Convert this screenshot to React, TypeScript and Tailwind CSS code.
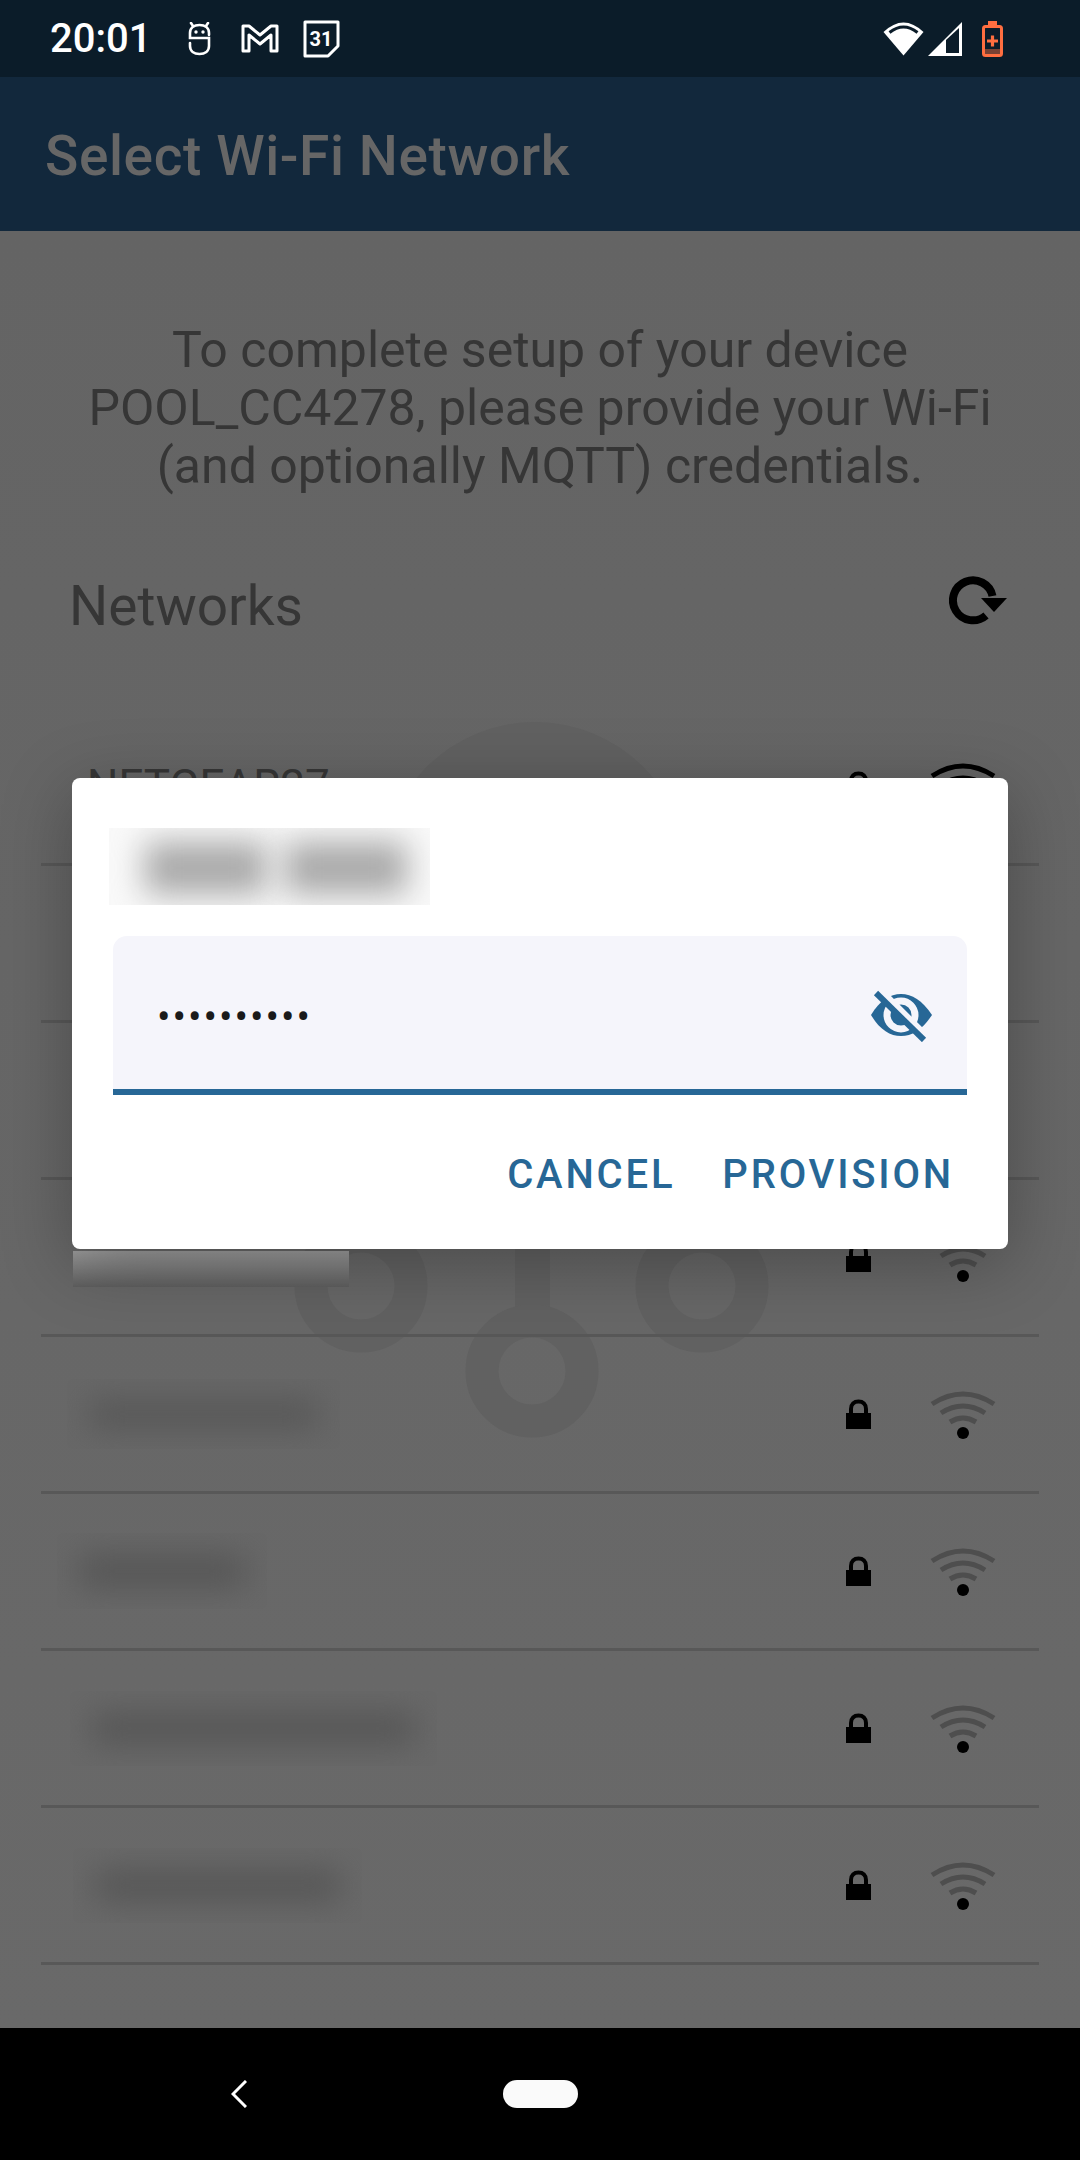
const blue = '#276796'

function StatusIcons() {
  return (
    <div className="flex items-center h-full">
      <svg width="25" height="34" viewBox="0 0 25 34" fill="none" stroke="white" strokeWidth="2.6" className="ml-[36px]">
        <path d="M22 13 V11 C22 6 18 3 12.5 3 C7 3 3 6 3 11 V16 H22 V24 C22 29 18 32 12.5 32 C7 32 3 29 3 24 V21" strokeLinecap="round" />
        <path d="M4 1 L6 4 M21 1 L19 4" strokeLinecap="round" />
        <circle cx="9" cy="10" r="1.7" fill="white" stroke="none" />
        <circle cx="16" cy="10" r="1.7" fill="white" stroke="none" />
      </svg>
      <svg width="38" height="29" viewBox="0 0 38 29" fill="none" stroke="white" strokeWidth="3" strokeLinejoin="round" className="ml-[29px]">
        <path d="M2 2 H8 L19 11 L30 2 H36 V27 H30 V11 L19 20 L8 11 V27 H2 Z" />
      </svg>
      <svg width="37" height="38" viewBox="0 0 37 38" fill="none" className="ml-[24px]">
        <path d="M2 2 H35 V26 L25 36 H2 Z" stroke="white" strokeWidth="3" strokeLinejoin="round" />
        <text x="18" y="26" textAnchor="middle" fill="white" fontSize="20" fontWeight="700" fontFamily="Roboto, sans-serif">31</text>
      </svg>
    </div>
  )
}

function SystemIcons() {
  return (
    <div className="flex items-center h-full ml-auto pr-[77px]">
      <svg width="41" height="34" viewBox="0 0 41 34">
        <path d="M20.5 33.5 L0.5 10 Q20.5 -9 40.5 10 Z" fill="white" />
        <path d="M6.5 10.5 Q20.5 -0.5 34.5 10.5" fill="none" stroke="#0b1c29" strokeWidth="3" />
      </svg>
      <svg width="34" height="34" viewBox="0 0 34 34" className="ml-[4px]">
        <path d="M0 34 L34 0 V34 Z" fill="white" />
        <path d="M18 18 L31 6 V31 H18 Z" fill="#0b1c29" />
      </svg>
      <svg width="21" height="36" viewBox="0 0 21 36" className="ml-[20px]">
        <rect x="6" y="0" width="9" height="5" fill="#ff6e40" />
        <rect x="1.500" y="5.500" width="18" height="29" rx="2" fill="none" stroke="#ff6e40" strokeWidth="3" />
        <path d="M5 20 H16 M10.500 14.500 V25.500" stroke="#ff6e40" strokeWidth="3.2" />
        <rect x="2" y="28" width="17" height="6" fill="#ff6e40" opacity="0.45" />
      </svg>
    </div>
  )
}

function LockIcon() {
  return (
    <svg width="25" height="30" viewBox="0 0 25 30">
      <path d="M5 15 V10 C5 5 8 2.500 12.500 2.500 C17 2.500 20 5 20 10 V15" fill="none" stroke="black" strokeWidth="4" />
      <rect x="0" y="14" width="25" height="16" fill="black" />
    </svg>
  )
}

function WifiIcon({ strong }: { strong?: boolean }) {
  const arc = strong ? '#000000' : '#4e4e4e'
  return (
    <svg width="70" height="56" viewBox="0 0 70 56" fill="none" className="overflow-visible">
      <path d="M4 18 Q35 -2 66 18" stroke={arc} strokeWidth="5" />
      <path d="M13 27 Q35 13 57 27" stroke={arc} strokeWidth="5" />
      <path d="M22 36 Q35 28 48 36" stroke={arc} strokeWidth="5" />
      <circle cx="35" cy="47" r="6" fill="black" />
    </svg>
  )
}

function BlurName({ left, width, height }: { left: number; width: number; height: number }) {
  return (
    <div className="overflow-hidden p-[22px]" style={{ marginLeft: left, width, height }}>
      <div className="w-full h-full flex blur-[16px]">
        <div className="flex-1 bg-[#555555]" />
        <div className="flex-1 bg-[#555555]" />
      </div>
    </div>
  )
}

function Row({ children }: { children?: React.ReactNode }) {
  return (
    <div className="relative h-[157px] box-border border-b-[3px] border-[#585858] flex items-center">
      <div className="flex-1">{children}</div>
      <LockIcon />
      <div className="ml-[57px] mr-[41px]">
        <WifiIcon />
      </div>
    </div>
  )
}

function Logo() {
  return (
    <svg width="660" height="730" viewBox="200 720 660 730" fill="none" className="absolute left-[200px] top-[489px]">
      <circle cx="535" cy="875" r="153" fill="#616161" />
      <rect x="515" y="1000" width="35" height="310" fill="#616161" />
      <circle cx="361" cy="1286" r="50" stroke="#616161" strokeWidth="33" />
      <circle cx="702" cy="1286" r="50" stroke="#616161" strokeWidth="33" />
      <circle cx="532" cy="1371" r="50" stroke="#616161" strokeWidth="33" />
    </svg>
  )
}

function Dialog() {
  return (
    <div className="absolute left-[72px] top-[547px] w-[936px] h-[471px] bg-white rounded-[8px] shadow-[0_14px_70px_rgba(0,0,0,0.28)] flex flex-col">
      <div className="ml-[37px] mt-[50px] w-[321px] h-[77px] bg-[#f9f9f9] overflow-hidden flex gap-[18px] pl-[36px] pt-[14px]">
        <div className="w-[122px] h-[52px] bg-[#a8a8a8] blur-[16px]" />
        <div className="w-[122px] h-[52px] bg-[#a8a8a8] blur-[16px]" />
      </div>
      <div className="mx-[41px] mt-[31px] h-[159px] box-border bg-[#f5f5fb] rounded-t-[14px] border-b-[6px] border-[#276796] flex items-center pl-[44px] pr-[33px]">
        <span className="text-[#1a1a1a] text-[40px] tracking-[2px] font-['Roboto',sans-serif] mt-[11px]">••••••••••</span>
        <svg width="64" height="52" viewBox="0 0 64 52" fill="none" className="ml-auto mt-[7px]">
          <path d="M1 25 C10 10 20 4 31 4 C42 4 52 10 62 25 C52 40 42 46 31 46 C20 46 10 40 1 25 Z" fill={blue} />
          <circle cx="31" cy="25" r="14" stroke="#f5f5fb" strokeWidth="7" />
          <path d="M9 -1 L57 47" stroke="#f5f5fb" strokeWidth="7" />
          <path d="M6 3 L54 50" stroke={blue} strokeWidth="6" />
        </svg>
      </div>
      <div className="flex-1 flex items-center justify-end gap-[47px] pr-[54px] pt-[5px] text-[40px] leading-none font-medium tracking-[2.8px] font-['Roboto',sans-serif]" style={{ color: blue }}>
        <span>CANCEL</span>
        <span>PROVISION</span>
      </div>
    </div>
  )
}

export default function App() {
  return (
    <div className="w-[1080px] h-[2160px] flex flex-col overflow-hidden font-['Roboto',sans-serif]">
      <div className="h-[77px] bg-[#0b1c29] flex items-center pl-[50px]">
        <span className="text-white text-[40px] font-medium">20:01</span>
        <StatusIcons />
        <SystemIcons />
      </div>
      <div className="h-[154px] bg-[#12283c] flex items-center pl-[45px]">
        <h1 className="text-[#666666] text-[55px] font-medium tracking-[0.6px] pt-[5px]">Select Wi-Fi Network</h1>
      </div>
      <div className="relative flex-1 bg-linear-to-b from-[#646464] to-[#696969] text-[#363636]">
        <Logo />
        <div className="relative">
          <p className="pt-[90px] text-center text-[50px] leading-[58px]">
            To complete setup of your device
            <br />
            POOL_CC4278, please provide your Wi-Fi
            <br />
            (and optionally MQTT) credentials.
          </p>
          <div className="flex items-center h-[214px] pl-[69px] pr-[73px]">
            <span className="text-[55px] mt-[8px]">Networks</span>
            <svg width="58" height="50" viewBox="0 0 58 50" fill="none" className="ml-auto -mt-[5px]">
              <path d="M37 40.500 A20 20 0 1 1 43.500 21" stroke="black" strokeWidth="8" />
              <path d="M32 23 H58 L45 37 Z" fill="black" />
            </svg>
          </div>
          <div className="mx-[41px]">
            <div className="relative h-[157px] box-border border-b-[3px] border-[#585858] flex items-center">
              <span className="flex-1 pl-[46px] text-[44px]">NETGEAR27</span>
              <LockIcon />
              <div className="ml-[57px] mr-[41px]">
                <WifiIcon strong />
              </div>
            </div>
            <Row />
            <Row />
            <Row>
              <div className="absolute left-[32px] top-[71px] w-[276px] h-[36px] bg-linear-to-b from-[#9c9c9c] to-[#5e5e5e]" />
            </Row>
            <Row>
              <BlurName left={26} width={273} height={70} />
            </Row>
            <Row>
              <BlurName left={16} width={210} height={76} />
            </Row>
            <Row>
              <BlurName left={29} width={367} height={75} />
            </Row>
            <Row>
              <BlurName left={32} width={289} height={75} />
            </Row>
          </div>
        </div>
        <Dialog />
      </div>
      <div className="h-[132px] bg-black flex items-center pl-[231px]">
        <svg width="16" height="28" viewBox="0 0 16 28" fill="none">
          <path d="M15 1 L2 14 L15 27" stroke="white" strokeWidth="3" />
        </svg>
        <div className="ml-[256px] w-[75px] h-[28px] rounded-full bg-[#fafafa]" />
      </div>
    </div>
  )
}
